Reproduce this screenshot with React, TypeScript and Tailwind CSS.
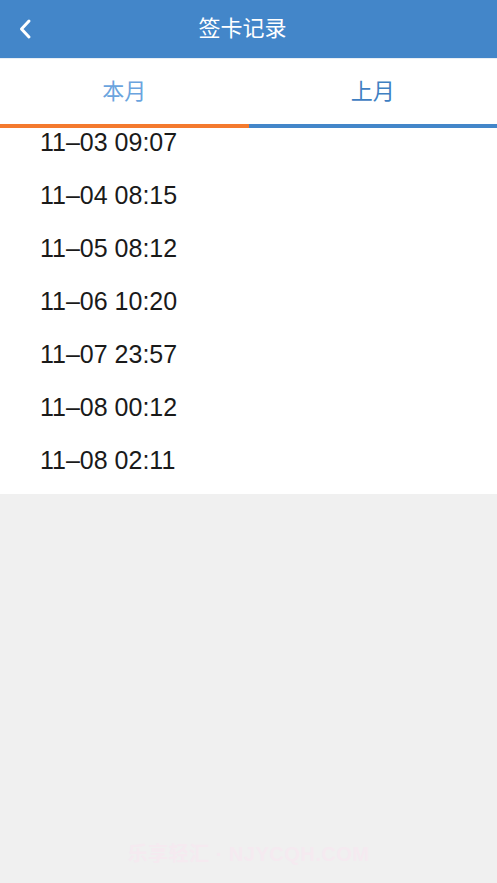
import { useState } from 'react';

const records = [
  '11–03 09:07',
  '11–04 08:15',
  '11–05 08:12',
  '11–06 10:20',
  '11–07 23:57',
  '11–08 00:12',
  '11–08 02:11',
];

export default function App() {
  const [tab, setTab] = useState(0);

  return (
    <div
      className="w-[497px] h-[883px] bg-[#f0f0f0] flex flex-col overflow-hidden"
      style={{ fontFamily: '"Liberation Sans", "Noto Sans CJK SC", sans-serif' }}
    >
      {/* header */}
      <div className="h-[58px] bg-[#4386c9] flex items-center relative shrink-0">
        <button className="absolute left-[14px] top-[16px] w-[22px] h-[26px] flex items-center justify-center">
          <svg width="14" height="22" viewBox="0 0 14 22" fill="none">
            <path d="M11 3 L3.5 11 L11 19" stroke="#fff" strokeWidth="3" strokeLinecap="round" strokeLinejoin="round" />
          </svg>
        </button>
        <h1 className="flex-1 text-center text-white text-[22px] leading-none pr-[12px]">签卡记录</h1>
      </div>

      {/* tabs */}
      <div className="bg-white shrink-0 border-t border-[#e8eef5]">
        <div className="flex h-[65px]">
          <button
            onClick={() => setTab(0)}
            className="flex-1 flex items-center justify-center text-[22px] text-[#6aa4de]"
          >
            本月
          </button>
          <button
            onClick={() => setTab(1)}
            className="flex-1 flex items-center justify-center text-[22px] text-[#3f80c2]"
          >
            上月
          </button>
        </div>
        <div className="flex h-[4px]">
          <div className={tab === 0 ? 'flex-1 bg-[#f47a2e]' : 'flex-1 bg-[#4386c9]'} />
          <div className={tab === 1 ? 'flex-1 bg-[#f47a2e]' : 'flex-1 bg-[#4386c9]'} />
        </div>
      </div>

      {/* list */}
      <div className="bg-white h-[366px] overflow-hidden shrink-0">
        <div className="-mt-[12px]">
          {records.map((r) => (
            <div key={r} className="h-[53px] flex items-center pl-[40px] text-[25px] text-[#1a1a1a]">
              {r}
            </div>
          ))}
        </div>
      </div>

      <div className="flex-1 flex items-end justify-center pb-[14px]">
        <span className="text-[20px] font-bold text-[#f5eaf0] tracking-wide">乐享轻汇 · NJYCQH.COM</span>
      </div>
    </div>
  );
}
